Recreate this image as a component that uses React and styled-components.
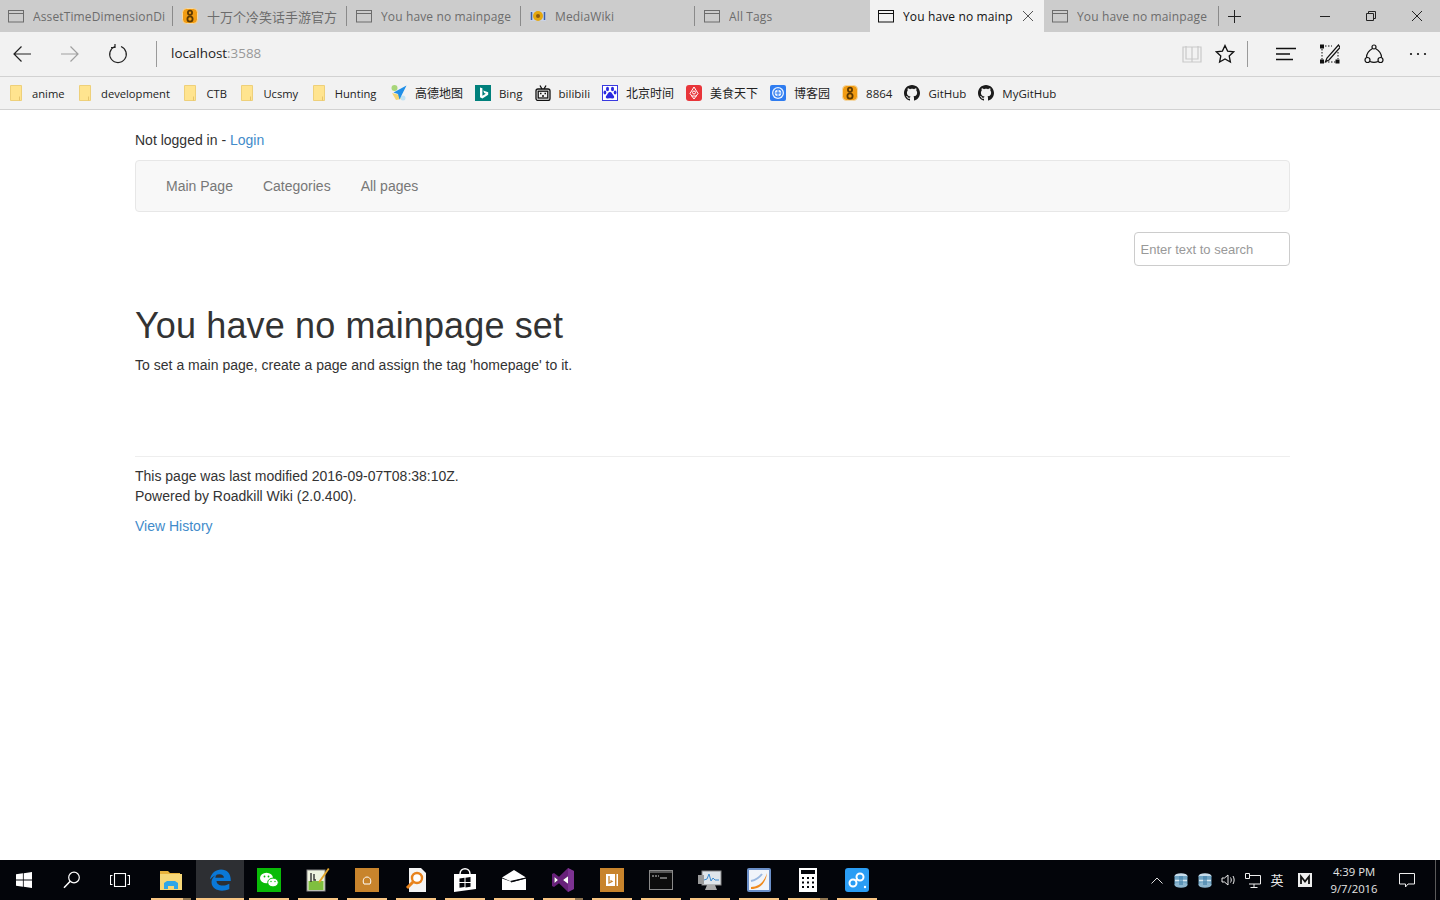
import React from 'react';
import styled, {createGlobalStyle} from 'styled-components';

const UI_FONT = `"Open Sans", "Noto Sans", "Noto Sans CJK SC", sans-serif`;

const GlobalStyle = createGlobalStyle`
  html, body {
    margin: 0;
    padding: 0;
    background: #fff;
  }
  * {
    box-sizing: border-box;
  }
`;

const Page = styled.div`
  width: 1440px;
  height: 900px;
  display: flex;
  flex-direction: column;
  overflow: hidden;
  font-family: "Liberation Sans", Arial, sans-serif;
  font-size: 14px;
  line-height: 20px;
  color: #333;
`;

/* tab strip */
const TabStrip = styled.div`
  display: flex;
  height: 32px;
  background: #ccc;
  font-family: ${UI_FONT};
  font-size: 12px;
  letter-spacing: 0.13px;
  flex: none;
`;
const Tab = styled.div`
  position: relative;
  width: ${p => (p.$last ? '175px' : '174px')};
  display: flex;
  align-items: center;
  gap: 9px;
  padding-left: 8px;
  color: ${p => (p.$active ? '#111' : '#6c6c6c')};
  background: ${p => (p.$active ? '#f2f2f2' : 'transparent')};
  white-space: nowrap;
  overflow: hidden;
  &::after {
    content: ${p => (p.$noSep ? 'none' : "''")};
    position: absolute;
    top: 6px;
    bottom: 6px;
    right: ${p => (p.$last ? '0' : '1px')};
    width: 1px;
    background: #8a8a8a;
  }
`;
const TabTitle = styled.span`
  flex: 1;
  overflow: hidden;
  padding-top: 2px;
  font-size: ${p => (p.$cjk ? '13px' : 'inherit')};
  letter-spacing: ${p => (p.$cjk ? '0' : 'inherit')};
  line-height: 18px;
`;
const TabClose = styled.svg`
  flex: none;
  margin-right: 11px;
`;
const NewTab = styled.div`
  width: 30px;
  display: flex;
  align-items: center;
  justify-content: center;
`;
const WindowButtons = styled.div`
  margin-left: auto;
  display: flex;
`;
const WindowButton = styled.div`
  width: 46px;
  display: flex;
  align-items: center;
  justify-content: center;
`;

/* address bar */
const Toolbar = styled.div`
  flex: none;
  height: 45px;
  display: flex;
  align-items: center;
  gap: 28px;
  padding: 0 12px 1px;
  background: #f2f2f2;
  border-bottom: 1px solid #d2d2d2;
`;
const ToolIcon = styled.svg`
  flex: none;
  display: block;
`;
const ToolSep = styled.div`
  flex: none;
  width: 1px;
  height: 26px;
  background: #9a9a9a;
`;
const Address = styled.div`
  flex: 1;
  margin: 0 0 2px -14px;
  font-family: ${UI_FONT};
  font-size: 13.4px;
  color: #222;
`;
const Port = styled.span`
  color: #999;
`;
const ToolRight = styled.div`
  display: flex;
  align-items: center;
  gap: 24px;
`;
const ReadGroup = styled.div`
  display: flex;
  align-items: center;
  gap: 13px;
  margin-right: -16px;
`;

/* favorites bar */
const FavBar = styled.div`
  flex: none;
  height: 33px;
  display: flex;
  align-items: center;
  gap: 12px;
  padding: 0 0 1px 10px;
  background: #f2f2f2;
  border-bottom: 1px solid #d2d2d2;
  font-family: ${UI_FONT};
  color: #222;
`;
const Fav = styled.div`
  display: flex;
  align-items: center;
  gap: ${p => (p.$folder ? '10px' : '8px')};
  margin-right: ${p => (p.$folder ? '2.5px' : '0')};
  white-space: nowrap;
  font-size: ${p => (p.$cjk ? '12px' : p.$folder ? '11.2px' : '11.5px')};
`;
const FavLabel = styled.span`
  padding-top: 2px;
  line-height: 18px;
`;

/* page content */
const Main = styled.main`
  flex: 1;
  padding: 20px 150px 0 135px;
`;
const LoginLine = styled.div`
  height: 20px;
  margin-bottom: 10px;
`;
const Link = styled.a`
  color: #428bca;
  text-decoration: none;
`;
const Navbar = styled.nav`
  height: 52px;
  display: flex;
  align-items: center;
  gap: 30px;
  padding: 0 30px;
  background: #f8f8f8;
  border: 1px solid #e7e7e7;
  border-radius: 4px;
  margin-bottom: 20px;
`;
const NavLink = styled.a`
  color: #777;
  text-decoration: none;
`;
const SearchRow = styled.div`
  display: flex;
  justify-content: flex-end;
  margin-bottom: 35px;
`;
const SearchInput = styled.input`
  width: 156px;
  height: 34px;
  padding: 0 6px 0 5.5px;
  border: 1px solid #ccc;
  border-radius: 4px;
  outline: none;
  font-family: inherit;
  font-size: 13px;
  background: #fff;
  &::placeholder {
    color: #999;
    opacity: 1;
  }
`;
const Title = styled.h1`
  margin: 0 0 4px;
  font-size: 36px;
  line-height: 50px;
  font-weight: 400;
  letter-spacing: 0.13px;
  color: #333;
`;
const Intro = styled.p`
  margin: 0 0 81px;
  letter-spacing: 0.02px;
`;
const Footer = styled.footer`
  border-top: 1px solid #eee;
  padding-top: 9px;
`;
const FooterLink = styled.div`
  margin-top: 10px;
`;

/* taskbar */
const Taskbar = styled.div`
  flex: none;
  height: 40px;
  display: flex;
  align-items: stretch;
  background: #03050a;
  color: #e8e8e8;
`;
const SysButton = styled.div`
  width: 48px;
  display: flex;
  align-items: center;
  justify-content: center;
`;
const Pins = styled.div`
  display: flex;
  margin-left: 3px;
  gap: 1px;
`;
const Pin = styled.div`
  position: relative;
  width: 48px;
  display: flex;
  align-items: center;
  justify-content: center;
  background: ${p => (p.$active ? '#2d2f33' : 'transparent')};
  &::after {
    content: '';
    position: absolute;
    bottom: 0;
    height: 2px;
    left: ${p => (p.$active ? '0' : '4px')};
    right: ${p => (p.$active ? '0' : '4px')};
    background: ${p =>
      p.$stacked
        ? 'linear-gradient(to right, #f8c583 0 32px, #8f7550 32px)'
        : '#f8c583'};
  }
`;
const Tray = styled.div`
  margin-left: auto;
  display: flex;
  align-items: center;
`;
const TrayItem = styled.div`
  width: 24px;
  margin-left: ${p => p.$gap || 0}px;
  display: flex;
  align-items: center;
  justify-content: center;
  font-family: "Noto Sans CJK SC", sans-serif;
  font-size: 13px;
`;
const Clock = styled.div`
  width: 66px;
  margin: 0 0 1px 4px;
  text-align: center;
  font-family: ${UI_FONT};
  font-size: 11.3px;
  line-height: 17px;
  color: #e4e4e4;
`;
const ActionCenter = styled.div`
  width: 40px;
  display: flex;
  align-items: center;
  justify-content: center;
`;
const DesktopEdge = styled.div`
  width: 5px;
  align-self: stretch;
  border-left: 1px solid #5a5a5a;
  margin-left: 8px;
`;

/* icons */
const TabPage = ({active}) => (
  <ToolIcon width="16" height="14" viewBox="0 0 16 14" fill="none" stroke={active ? '#111' : '#6c6c6c'}>
    <rect x="0.5" y="1.5" width="15" height="11.5" />
    <path d="M0.5 4.5h15" />
  </ToolIcon>
);
const Eight = ({size = 16}) => (
  <ToolIcon width={size} height={size} viewBox="0 0 16 16">
    <rect x="0.5" y="0.5" width="15" height="15" rx="4" fill="#f29c12" stroke="#f4d9a8" />
    <circle cx="8" cy="4.8" r="2.1" fill="none" stroke="#5f3a00" strokeWidth="1.8" />
    <circle cx="8" cy="11" r="2.6" fill="none" stroke="#5f3a00" strokeWidth="1.8" />
  </ToolIcon>
);
const MediaWikiIcon = () => (
  <ToolIcon width="16" height="14" viewBox="0 0 16 14">
    <rect x="0" y="2" width="16" height="10" fill="#c9d2e6" />
    <path d="M1.5 3v8M14.5 3v8" stroke="#3b5fa8" strokeWidth="1.5" />
    <circle cx="8" cy="7" r="5" fill="#e5a810" />
    <circle cx="8" cy="7" r="2" fill="#8c5a10" />
  </ToolIcon>
);
const Folder = () => (
  <ToolIcon width="12" height="16" viewBox="0 0 12 16">
    <path d="M0.5 0.5h11v15h-11z" fill="#ffe48f" stroke="#eed07a" />
    <path d="M9.5 11.5v4" stroke="#e6c56c" />
  </ToolIcon>
);
const GitHubIcon = () => (
  <ToolIcon width="16" height="16" viewBox="0 0 16 16">
    <path fill="#1b1b1b" d="M8 0C3.58 0 0 3.58 0 8c0 3.54 2.29 6.53 5.47 7.59.4.07.55-.17.55-.38 0-.19-.01-.82-.01-1.49-2.01.37-2.53-.49-2.69-.94-.09-.23-.48-.94-.82-1.13-.28-.15-.68-.52-.01-.53.63-.01 1.08.58 1.23.82.72 1.21 1.87.87 2.33.66.07-.52.28-.87.51-1.07-1.78-.2-3.64-.89-3.64-3.95 0-.87.31-1.59.82-2.15-.08-.2-.36-1.02.08-2.12 0 0 .67-.21 2.2.82.64-.18 1.32-.27 2-.27s1.36.09 2 .27c1.53-1.04 2.2-.82 2.2-.82.44 1.1.16 1.92.08 2.12.51.56.82 1.27.82 2.15 0 3.07-1.87 3.75-3.65 3.95.29.25.54.73.54 1.48 0 1.07-.01 1.93-.01 2.2 0 .21.15.46.55.38C13.71 14.53 16 11.53 16 8c0-4.42-3.58-8-8-8z" />
  </ToolIcon>
);
const AmapIcon = () => (
  <ToolIcon width="16" height="16" viewBox="0 0 16 16">
    <circle cx="3.5" cy="3" r="3" fill="#a8d67a" />
    <path d="M1 8l4 7 5-1-1-4z" fill="#f3d676" />
    <circle cx="12" cy="13" r="2.5" fill="#bfe2f5" />
    <path d="M15.5 0.5L2.5 7.5l4.500 1.500 1.500 5.500z" fill="#1f8fe8" />
  </ToolIcon>
);
const BingIcon = () => (
  <ToolIcon width="16" height="16" viewBox="0 0 16 16">
    <rect width="16" height="16" fill="#00807c" />
    <path d="M5 2.500l2.400.8v7.400l3.400-2-1.600-.8-1-2.400 5 1.800v2.400L7.400 13.500 5 12.200z" fill="#fff" />
  </ToolIcon>
);
const BilibiliIcon = () => (
  <ToolIcon width="16" height="16" viewBox="0 0 16 16" fill="none" stroke="#111" strokeWidth="1.300">
    <rect x="1" y="4" width="14" height="11.500" rx="2" />
    <rect x="3.200" y="6.200" width="9.600" height="6.800" fill="#f2f2f2" />
    <path d="M5 .5l2 3.500M11 .5L9 4" />
    <path d="M5 8.500h1.500M9.500 8.500H11M7 11h2" />
  </ToolIcon>
);
const BaiduIcon = () => (
  <ToolIcon width="16" height="16" viewBox="0 0 16 16">
    <rect x="0.500" y="0.500" width="15" height="15" fill="#fff" stroke="#3a3ae0" />
    <g fill="#2a2ae0">
      <ellipse cx="5.500" cy="4" rx="1.500" ry="2.200" />
      <ellipse cx="10.500" cy="4" rx="1.500" ry="2.200" />
      <ellipse cx="2.900" cy="7.500" rx="1.400" ry="1.900" />
      <ellipse cx="13.100" cy="7.500" rx="1.400" ry="1.900" />
      <path d="M8 7c-2 0-2 2-3.500 3.500C3 12 4 14 6 13.500c1.500-.4 2.500-.4 4 0 2 .5 3-1.500 1.500-3C10 9 10 7 8 7z" />
    </g>
  </ToolIcon>
);
const MeishiIcon = () => (
  <ToolIcon width="16" height="16" viewBox="0 0 16 16">
    <rect width="16" height="16" rx="3" fill="#e8353a" />
    <path d="M8 2L12 8.500 8 14 4 8.500z" fill="none" stroke="#fff" />
    <circle cx="8" cy="7.500" r="1.500" fill="none" stroke="#fff" />
    <path d="M5.500 11h5" stroke="#fff" />
  </ToolIcon>
);
const CnblogsIcon = () => (
  <ToolIcon width="16" height="16" viewBox="0 0 16 16">
    <rect width="16" height="16" rx="2" fill="#2f7cf0" />
    <circle cx="8" cy="8" r="6" fill="#e8f2ff" />
    <circle cx="8" cy="8" r="4" fill="none" stroke="#2f7cf0" strokeWidth="1.400" />
    <path d="M8 5v6M5.500 8h5" stroke="#2f7cf0" />
  </ToolIcon>
);

const WinLogo = () => (
  <ToolIcon width="16" height="16" viewBox="0 0 16 16" fill="#fff">
    <path d="M0 2.300l6.900-1v6.300H0zM7.700 1.200L16 0v7.600H7.700zM0 8.400h6.900v6.300l-6.900-1zM7.700 8.400H16V16l-8.300-1.200z" />
  </ToolIcon>
);
const SearchGlyph = () => (
  <ToolIcon width="18" height="18" viewBox="0 0 18 18" fill="none" stroke="#fff" strokeWidth="1.200">
    <circle cx="11" cy="6.500" r="5.300" />
    <path d="M7.200 10.300L1 16.800" strokeWidth="1.500" />
  </ToolIcon>
);
const TaskView = () => (
  <ToolIcon width="20" height="14" viewBox="0 0 20 14" fill="none" stroke="#fff" strokeWidth="1.100">
    <rect x="4.500" y="0.500" width="11" height="13" />
    <path d="M2.500 2.500H.5v9h2M17.500 2.500h2v9h-2" />
  </ToolIcon>
);
const ExplorerIcon = () => (
  <ToolIcon width="22" height="20" viewBox="0 0 22 20">
    <path d="M0 1h8l2 2h10v4H0z" fill="#e8b23c" />
    <rect x="0" y="4" width="22" height="16" fill="#f6d778" />
    <path d="M4 19v-6l3-2h8l3 2v6h-4v-3H8v3z" fill="#2fa6e8" />
  </ToolIcon>
);
const EdgeIcon = () => (
  <ToolIcon width="22" height="22" viewBox="0 0 22 22">
    <path fill="#0a78d7" d="M1 10.500C2 4 7 .5 12 .5c6 0 10 4 9.800 11.500H7.500c.2 4.500 6.500 6.300 12.800 2.700v5.300C13 23.500 2.500 21.500 2.500 13c0-3 2-6 5.500-7.500-1 1.200-1.500 2-1.700 3.300h8.600c.2-4-6.800-6.300-13.900 1.700z" />
  </ToolIcon>
);
const WeChatIcon = () => (
  <ToolIcon width="24" height="24" viewBox="0 0 24 24">
    <rect width="24" height="24" fill="#09bb07" />
    <ellipse cx="9.500" cy="10" rx="6.500" ry="5.300" fill="#fff" />
    <ellipse cx="16" cy="14.500" rx="5.300" ry="4.400" fill="#fff" stroke="#09bb07" />
    <circle cx="7.500" cy="8.500" r=".9" fill="#09bb07" />
    <circle cx="11.500" cy="8.500" r=".9" fill="#09bb07" />
    <circle cx="14" cy="13.500" r=".7" fill="#09bb07" />
    <circle cx="18" cy="13.500" r=".7" fill="#09bb07" />
  </ToolIcon>
);
const NotepadIcon = () => (
  <ToolIcon width="24" height="24" viewBox="0 0 24 24">
    <rect x="1" y="2" width="18" height="21" fill="#eef3e0" stroke="#888" />
    <rect x="2.500" y="13" width="15" height="9" fill="#7fbf3f" />
    <path d="M5 5v9M8 6v6h2" stroke="#333" strokeWidth="1.400" fill="none" />
    <path d="M22 0l1.500 1-9 13-2 1 .5-2.300z" fill="#e2a52c" />
  </ToolIcon>
);
const OrangeTile = ({children}) => (
  <ToolIcon width="24" height="24" viewBox="0 0 24 24">
    <rect width="24" height="24" fill="#c8842c" />
    {children}
  </ToolIcon>
);
const FinderIcon = () => (
  <ToolIcon width="22" height="24" viewBox="0 0 22 24">
    <path d="M4 0h12l5 5v19H4z" fill="#f4f4f4" />
    <circle cx="12" cy="10" r="5" fill="#fff" stroke="#e8831c" strokeWidth="2.400" />
    <path d="M8 14l-6 6" stroke="#e8831c" strokeWidth="3" />
  </ToolIcon>
);
const StoreIcon = () => (
  <ToolIcon width="22" height="24" viewBox="0 0 22 24">
    <path d="M0 6h22v15l-22 3z" fill="#fff" />
    <path d="M6 6c0-7 10-7 10 0" fill="none" stroke="#fff" strokeWidth="1.500" />
    <path d="M5.500 10.500l5-.7v4.200h-5zM11.500 9.700l5-.7v5h-5zM5.500 15h5v4l-5 .7zM11.500 15h5v3.700l-5 .7z" fill="#03050a" />
  </ToolIcon>
);
const MailIcon = () => (
  <ToolIcon width="24" height="20" viewBox="0 0 24 20">
    <path d="M0 7.500L12 0l12 7.500L8 11z" fill="#fff" />
    <path d="M0 8.500l10 3.500 14-3.500V20H0z" fill="#fff" />
    <path d="M24 8L9 12" stroke="#03050a" />
  </ToolIcon>
);
const VsIcon = () => (
  <ToolIcon width="22" height="24" viewBox="0 0 22 24">
    <path d="M16 0l6 3v18l-6 3-9-8.700L2 19 0 18V6l2-1 5 3.700zM2.500 9v6L6 12zM11 12l5 3.800V8.200z" fill="#68217a" />
    <path d="M16 0l6 3v18l-6 3z" fill="#8a3da0" opacity=".6" />
    <path d="M2.500 9v6L6 12zM11 12l5 3.800V8.200z" fill="#fff" />
  </ToolIcon>
);
const ConsoleIcon = () => (
  <ToolIcon width="24" height="20" viewBox="0 0 24 20">
    <rect x="0.500" y="0.500" width="23" height="19" fill="#0c0c0c" stroke="#8a8a8a" />
    <rect x="1" y="1" width="22" height="2" fill="#555" />
    <path d="M3 6h2M6 6h2M9 6h1M11 8h7" stroke="#ccc" />
  </ToolIcon>
);
const MonitorIcon = () => (
  <ToolIcon width="24" height="22" viewBox="0 0 24 22">
    <rect x="4" y="2" width="19" height="14" fill="#dfe5ea" stroke="#888" />
    <path d="M6 11l3-1 2-5 2 7 2-3 2 2h4" fill="none" stroke="#3b8ad0" />
    <rect x="0" y="6" width="6" height="9" fill="#999" />
    <path d="M9 16h8l2 5H7z" fill="#aaa" />
  </ToolIcon>
);
const FoxitIcon = () => (
  <ToolIcon width="24" height="24" viewBox="0 0 24 24">
    <rect width="24" height="24" rx="2" fill="#6a8fc8" />
    <rect x="2" y="2" width="20" height="20" fill="#f0f4fa" />
    <path d="M4 19c8 0 13-5 16-14-1 9-6 16-16 16z" fill="#f08a1c" />
    <path d="M4 13c5-1 8-3 11-7" stroke="#9ab8e0" fill="none" strokeWidth="2" />
  </ToolIcon>
);
const CalcIcon = () => (
  <ToolIcon width="18" height="24" viewBox="0 0 18 24">
    <rect width="18" height="24" fill="#fff" />
    <rect x="2" y="2" width="14" height="4" fill="#03050a" />
    <path d="M3 10h2M8 10h2M13 10h2M3 14.500h2M8 14.500h2M13 14.500h2M3 19h2M8 19h2M13 19h2" stroke="#03050a" strokeWidth="2" />
  </ToolIcon>
);
const BaiduCloudIcon = () => (
  <ToolIcon width="24" height="24" viewBox="0 0 24 24">
    <rect width="24" height="24" rx="3" fill="#2a9df4" />
    <circle cx="8" cy="15" r="3.500" fill="none" stroke="#fff" strokeWidth="2" />
    <circle cx="15" cy="9" r="3.500" fill="none" stroke="#fff" strokeWidth="2" />
    <path d="M10.500 12.500L13 11" stroke="#fff" strokeWidth="2" />
    <circle cx="20" cy="19" r="1.200" fill="#fff" />
  </ToolIcon>
);
const TrayDisk = () => (
  <ToolIcon width="14" height="15" viewBox="0 0 14 15">
    <ellipse cx="7" cy="3" rx="6.500" ry="2.800" fill="#c7dcea" />
    <rect x="0.500" y="3" width="13" height="9" fill="#6fa3c2" />
    <ellipse cx="7" cy="12" rx="6.500" ry="2.800" fill="#8cb6cf" />
    <path d="M1 7.500h12" stroke="#d8e8f0" strokeWidth="1.500" />
    <rect x="5" y="3" width="4" height="9" fill="#3f7fa8" opacity=".6" />
  </ToolIcon>
);

const favorites = [
  {name: 'anime', folder: true},
  {name: 'development', folder: true},
  {name: 'CTB', folder: true},
  {name: 'Ucsmy', folder: true},
  {name: 'Hunting', folder: true},
  {name: '高德地图', Icon: AmapIcon, cjk: true},
  {name: 'Bing', Icon: BingIcon},
  {name: 'bilibili', Icon: BilibiliIcon},
  {name: '北京时间', Icon: BaiduIcon, cjk: true},
  {name: '美食天下', Icon: MeishiIcon, cjk: true},
  {name: '博客园', Icon: CnblogsIcon, cjk: true},
  {name: '8864', Icon: Eight},
  {name: 'GitHub', Icon: GitHubIcon},
  {name: 'MyGitHub', Icon: GitHubIcon},
];

const pins = [
  {id: 'explorer', el: <ExplorerIcon />, stacked: true},
  {id: 'edge', el: <EdgeIcon />, active: true},
  {id: 'wechat', el: <WeChatIcon />},
  {id: 'notepad', el: <NotepadIcon />},
  {
    id: 'tile',
    el: (
      <OrangeTile>
        <path d="M9 16c-1.500-2-1-7 3-7s4.500 5 3 7z" fill="none" stroke="#fff" />
      </OrangeTile>
    ),
  },
  {id: 'finder', el: <FinderIcon />},
  {id: 'store', el: <StoreIcon />},
  {id: 'mail', el: <MailIcon />},
  {id: 'vs', el: <VsIcon />, stacked: true},
  {
    id: 'bing',
    el: (
      <OrangeTile>
        <rect x="6" y="6" width="9" height="12" fill="#fff" />
        <rect x="16.500" y="6" width="1.500" height="12" fill="#fff" />
        <path d="M9 8v7l3-1.500-1.500-1" fill="none" stroke="#c8842c" strokeWidth="1.300" />
      </OrangeTile>
    ),
  },
  {id: 'console', el: <ConsoleIcon />},
  {id: 'monitor', el: <MonitorIcon />},
  {id: 'foxit', el: <FoxitIcon />},
  {id: 'calc', el: <CalcIcon />, stacked: true},
  {id: 'cloud', el: <BaiduCloudIcon />},
];

const tabs = [
  {title: 'AssetTimeDimensionDi'},
  {title: '十万个冷笑话手游官方', icon: <Eight />, cjk: true},
  {title: 'You have no mainpage'},
  {title: 'MediaWiki', icon: <MediaWikiIcon />},
  {title: 'All Tags', noSep: true},
];

export default function App() {
  return (
    <Page>
      <GlobalStyle />
      <TabStrip>
        {tabs.map(tab => (
          <Tab key={tab.title} $noSep={tab.noSep}>
            {tab.icon || <TabPage />}
            <TabTitle $cjk={tab.cjk}>{tab.title}</TabTitle>
          </Tab>
        ))}
        <Tab $active $noSep>
          <TabPage active />
          <TabTitle>You have no mainp</TabTitle>
          <TabClose width="10" height="10" viewBox="0 0 10 10" stroke="#555">
            <path d="M0 0l10 10M10 0L0 10" />
          </TabClose>
        </Tab>
        <Tab $last>
          <TabPage />
          <TabTitle>You have no mainpage</TabTitle>
        </Tab>
        <NewTab>
          <ToolIcon width="13" height="13" viewBox="0 0 13 13" stroke="#222">
            <path d="M6.500 0v13M0 6.500h13" />
          </ToolIcon>
        </NewTab>
        <WindowButtons>
          <WindowButton>
            <ToolIcon width="10" height="10" viewBox="0 0 10 10" stroke="#222">
              <path d="M0 5.500h10" />
            </ToolIcon>
          </WindowButton>
          <WindowButton>
            <ToolIcon width="10" height="10" viewBox="0 0 10 10" fill="none" stroke="#222">
              <path d="M2.500 2.500V.5h7v7h-2M.5 2.500h7v7h-7z" />
            </ToolIcon>
          </WindowButton>
          <WindowButton>
            <ToolIcon width="10" height="10" viewBox="0 0 10 10" stroke="#222">
              <path d="M0 0l10 10M10 0L0 10" />
            </ToolIcon>
          </WindowButton>
        </WindowButtons>
      </TabStrip>

      <Toolbar>
        <ToolIcon width="20" height="18" viewBox="0 0 20 18" fill="none" stroke="#222" strokeWidth="1.200">
          <path d="M19 9H2M9.500 1.500L2 9l7.500 7.500" />
        </ToolIcon>
        <ToolIcon width="20" height="18" viewBox="0 0 20 18" fill="none" stroke="#a0a0a0" strokeWidth="1.200">
          <path d="M1 9h17M10.500 1.500L18 9l-7.500 7.500" />
        </ToolIcon>
        <ToolIcon width="20" height="20" viewBox="0 0 20 20" fill="none" stroke="#222" strokeWidth="1.200">
          <path d="M7 2.500A8.300 8.300 0 1 0 13 2.500" />
          <path d="M7 0v3.500H3" />
        </ToolIcon>
        <ToolSep />
        <Address>
          localhost<Port>:3588</Port>
        </Address>
        <ReadGroup>
          <ToolIcon width="20" height="18" viewBox="0 0 20 18" fill="none" stroke="#c9c9c9" strokeWidth="1.200">
            <path d="M1 2h9v15H1zM10 2h9v15h-9zM4 1v13h6M16 1v13h-6" />
          </ToolIcon>
          <ToolIcon width="20" height="20" viewBox="0 0 20 20" fill="none" stroke="#111" strokeWidth="1.300">
            <path d="M10 1.500l2.600 5.600 6.100.7-4.500 4.200 1.200 6L10 15l-5.400 3 1.200-6-4.500-4.200 6.100-.7z" />
          </ToolIcon>
        </ReadGroup>
        <ToolSep />
        <ToolRight>
          <ToolIcon width="20" height="14" viewBox="0 0 20 14" stroke="#111" strokeWidth="1.300">
            <path d="M0 1.500h20M0 7h14M0 12.500h17" />
          </ToolIcon>
          <ToolIcon width="20" height="20" viewBox="0 0 20 20" fill="none" stroke="#111">
            <path d="M2 5v12M5 2h7M5 18h12M18 8v7" strokeDasharray="1.500 1.500" />
            <rect x="0.500" y="1" width="3" height="3" fill="#111" />
            <rect x="0.500" y="16" width="3" height="3" fill="#111" />
            <rect x="16" y="16" width="3" height="3" fill="#111" />
            <path d="M18.500 1L7 14l-1.500 3.500L9 16 20 3.500z" strokeWidth="1.200" />
          </ToolIcon>
          <ToolIcon width="20" height="20" viewBox="0 0 20 20" fill="none" stroke="#111" strokeWidth="1.200">
            <circle cx="10" cy="3" r="2" />
            <circle cx="3.500" cy="16" r="2.500" />
            <circle cx="16.500" cy="16" r="2.500" />
            <path d="M8.500 4.500C5 6.500 2.500 10 2.500 13.500M11.500 4.500c3.500 2 6 5.500 6 9M6 17.500c2.500 1 5.500 1 8 0" />
          </ToolIcon>
          <ToolIcon width="20" height="4" viewBox="0 0 20 4" fill="#111">
            <circle cx="3" cy="2" r="1.100" />
            <circle cx="10" cy="2" r="1.100" />
            <circle cx="17" cy="2" r="1.100" />
          </ToolIcon>
        </ToolRight>
      </Toolbar>

      <FavBar>
        {favorites.map(({name, folder, Icon, cjk}) => (
          <Fav key={name} $folder={folder} $cjk={cjk}>
            {folder ? <Folder /> : <Icon />}
            <FavLabel>{name}</FavLabel>
          </Fav>
        ))}
      </FavBar>

      <Main>
        <LoginLine>
          Not logged in - <Link href="#">Login</Link>
        </LoginLine>
        <Navbar>
          <NavLink href="#">Main Page</NavLink>
          <NavLink href="#">Categories</NavLink>
          <NavLink href="#">All pages</NavLink>
        </Navbar>
        <SearchRow>
          <SearchInput placeholder="Enter text to search" />
        </SearchRow>
        <Title>You have no mainpage set</Title>
        <Intro>To set a main page, create a page and assign the tag 'homepage' to it.</Intro>
        <Footer>
          <div>This page was last modified 2016-09-07T08:38:10Z.</div>
          <div>Powered by Roadkill Wiki (2.0.400).</div>
          <FooterLink>
            <Link href="#">View History</Link>
          </FooterLink>
        </Footer>
      </Main>

      <Taskbar>
        <SysButton>
          <WinLogo />
        </SysButton>
        <SysButton>
          <SearchGlyph />
        </SysButton>
        <SysButton>
          <TaskView />
        </SysButton>
        <Pins>
          {pins.map(pin => (
            <Pin key={pin.id} $active={pin.active} $stacked={pin.stacked}>
              {pin.el}
            </Pin>
          ))}
        </Pins>
        <Tray>
          <TrayItem>
            <ToolIcon width="12" height="7" viewBox="0 0 12 7" fill="none" stroke="#ddd">
              <path d="M.5 6.500L6 1l5.500 5.500" />
            </ToolIcon>
          </TrayItem>
          <TrayItem>
            <TrayDisk />
          </TrayItem>
          <TrayItem>
            <TrayDisk />
          </TrayItem>
          <TrayItem>
            <ToolIcon width="16" height="14" viewBox="0 0 16 14" fill="none" stroke="#eee">
              <path d="M1 5h2.500L7 2v10L3.500 9H1zM9.500 4.500c1 1.500 1 3.500 0 5M12 3c1.500 2.500 1.500 5.500 0 8" />
            </ToolIcon>
          </TrayItem>
          <TrayItem>
            <ToolIcon width="16" height="15" viewBox="0 0 16 15" fill="none" stroke="#eee">
              <path d="M4 2.500h11.500v8.500H4M0.500.5h4v5h-4zM9 11v3M5.500 14.500h7" />
            </ToolIcon>
          </TrayItem>
          <TrayItem>英</TrayItem>
          <TrayItem $gap={4}>
            <ToolIcon width="14" height="14" viewBox="0 0 14 14">
              <rect width="14" height="14" fill="#eee" />
              <path d="M3 11V3.500l4 5 4-5V11" fill="none" stroke="#111" strokeWidth="1.800" />
            </ToolIcon>
          </TrayItem>
          <Clock>
            <div>4:39 PM</div>
            <div>9/7/2016</div>
          </Clock>
          <ActionCenter>
            <ToolIcon width="16" height="15" viewBox="0 0 16 15" fill="none" stroke="#eee">
              <path d="M.5.500h15v10.500H9l-2.500 3v-3h-6z" />
            </ToolIcon>
          </ActionCenter>
          <DesktopEdge />
        </Tray>
      </Taskbar>
    </Page>
  );
}
